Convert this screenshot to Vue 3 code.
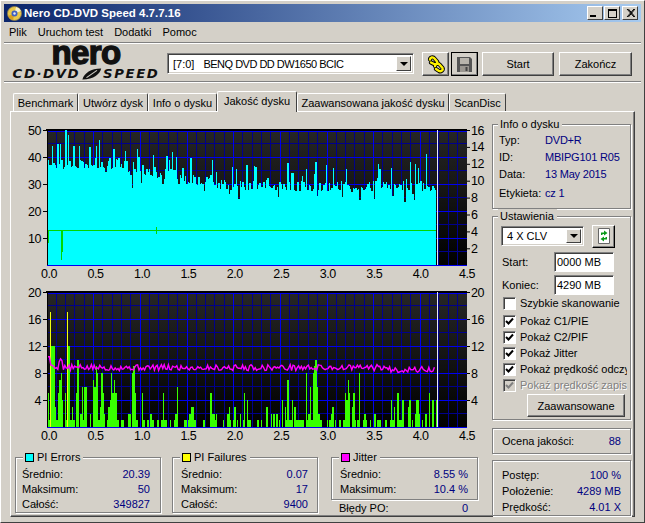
<script setup>
// seeded noise so the plots come out the same on every load
function makeRand(seed) {
  let s = seed
  return () => {
    s = (s * 1664525 + 1013904223) % 4294967296
    return s / 4294967296
  }
}

const PLOT_W = 420
const PLOT_H = 135
const END_X = 389 // where the scan stops, inside the plot

function base(x) {
  if (x < 80) return 37.5
  if (x < 110) return 35
  if (x < 130) return 33.5
  if (x < 165) return 31.5
  if (x < 220) return 29.5
  return 29
}

// closed staircase shape, reads as solid bars without seams between them
function stepPath(list, step, scale) {
  let d = `M${list[0].x} ${PLOT_H}`
  for (const b of list) {
    d += `V${(PLOT_H - b.v * scale).toFixed(1)}H${(b.x + step).toFixed(2)}`
  }
  return d + `V${PLOT_H}Z`
}

function piePath() {
  const rand = makeRand(17)
  const list = []
  const spikes = { 18: 50, 21: 48, 5: 44, 10: 45, 13: 45, 49: 44, 66: 43, 90: 43, 379: 41, 279: 37, 32: 44, 26: 44 }
  for (let x = 1; x <= END_X; x += 1.33) {
    const r = rand()
    let v = base(x) + (rand() - 0.45) * 4
    if (r > 0.85) v += 3 + rand() * 5
    else if (r < 0.1) v -= 2 + rand() * 3
    const key = Math.round(x)
    if (spikes[key]) v = spikes[key]
    list.push({ x, v })
  }
  return stepPath(list, 1.33, 2.7)
}

function failBars() {
  const rand = makeRand(91)
  const peaks = {
    1: 5, 3: 5, 4: 17, 5: 12, 6: 12, 7: 12, 8: 3, 10: 5, 11: 5, 12: 7, 13: 5, 14: 8, 15: 4, 17: 2, 18: 5, 21: 17, 22: 12,
    25: 3, 30: 10, 29: 5, 34: 6, 37: 6, 38: 6, 46: 7, 47: 6, 48: 13, 49: 9, 50: 8, 54: 8, 55: 5, 61: 3, 62: 4,
    64: 8, 65: 5, 66: 14, 67: 7, 68: 5, 85: 8, 86: 9, 87: 7, 88: 5, 94: 5, 116: 5, 130: 6, 145: 3, 163: 5,
    197: 5, 200: 4, 238: 3, 240: 7, 245: 4, 258: 8, 263: 6, 266: 8, 267: 9, 268: 10, 269: 6, 311: 8, 262: 4, 306: 5,
    270: 6, 298: 5, 299: 4, 300: 8, 301: 7, 302: 5, 370: 4, 381: 5, 385: 4, 388: 4, 362: 4, 360: 3, 350: 5, 355: 4,
  }
  const bars = []
  for (let x = 1; x <= END_X; x += 1.4) {
    const r = rand()
    let v = 0
    if (r > 0.42) v = 1
    if (r > 0.76) v = 2
    if (r > 0.91) v = 3
    if (r > 0.975) v = 4
    // the tall yellow needles stay one bar wide
    const p = peaks[Math.round(x)] || Math.min(peaks[Math.floor(x)] || 0, 12)
    if (p) v = p
    bars.push({ x, v })
  }
  return bars
}

function jitterPoints() {
  const rand = makeRand(5)
  const pts = []
  for (let x = 1; x <= END_X - 1; x += 1.4) {
    let v = 8.8 + (rand() - 0.5) * 0.9
    if (x < 3) v = 10.4
    else if (x < 5) v = 9.2
    else if (x > 12 && x < 16) v = 10.2 - rand() * 0.6
    const fall = x > 340 ? 0.3 : 0
    pts.push(`${x.toFixed(1)},${(PLOT_H - (v - fall) * 6.75).toFixed(1)}`)
  }
  return pts.join(' ')
}

const bars = failBars()
const greenPath = stepPath(bars.map((b) => ({ x: b.x, v: Math.min(b.v, 12) })), 1.4, 6.75)
const yellowPath = bars
  .filter((b) => b.v >= 13)
  .map((b) => `M${b.x.toFixed(1)} ${PLOT_H}V${(PLOT_H - b.v * 6.75).toFixed(1)}`)
  .join('')

const xLabels = ['0.0', '0.5', '1.0', '1.5', '2.0', '2.5', '3.0', '3.5', '4.0', '4.5'].map((t, i) => ({ t, x: 2 + i * 46.45 }))

const charts = [
  {
    id: 'top',
    left: ['50', '40', '30', '20', '10'].map((t, i) => ({ t, y: i * 27 })),
    right: ['16', '14', '12', '10', '8', '6', '4', '2'].map((t, i) => ({ t, y: i * 16.9 })),
    majorY: [27, 54, 81, 108],
    minorY: [13.5, 40.5, 67.5, 94.5, 121.5],
  },
  {
    id: 'bottom',
    left: ['20', '16', '12', '8', '4'].map((t, i) => ({ t, y: i * 27 })),
    right: ['20', '16', '12', '8', '4'].map((t, i) => ({ t, y: i * 27 })),
    majorY: [27, 54, 81, 108],
    minorY: [13.5, 40.5, 67.5, 94.5, 121.5],
  },
]

const majorX = [1, 2, 3, 4, 5, 6, 7, 8].map((i) => i * 46.67)
const minorX = []
for (let i = 1; i < 45; i++) if (i % 5) minorX.push(i * 9.333)

const pie = piePath()
const jitter = jitterPoints()

const tabs = [
  { name: 'Benchmark', w: 65 },
  { name: 'Utwórz dysk', w: 70 },
  { name: 'Info o dysku', w: 69 },
  { name: 'Jakość dysku', w: 80, active: true },
  { name: 'Zaawansowana jakość dysku', w: 152 },
  { name: 'ScanDisc', w: 57 },
]

const discInfo = [
  ['Typ:', 'DVD+R'],
  ['ID:', 'MBIPG101 R05'],
  ['Data:', '13 May 2015'],
  ['Etykieta:', 'cz 1'],
]

const checks = [
  { t: 'Szybkie skanowanie', on: false },
  { t: 'Pokaż C1/PIE', on: true },
  { t: 'Pokaż C2/PIF', on: true },
  { t: 'Pokaż Jitter', on: true },
  { t: 'Pokaż prędkość odczytu', on: true },
  { t: 'Pokaż prędkość zapisu', on: true, off: true },
]

const stats = [
  { name: 'PI Errors', color: '#00ffff', rows: [['Średnio:', '20.39'], ['Maksimum:', '50'], ['Całość:', '349827']] },
  { name: 'PI Failures', color: '#ffff00', rows: [['Średnio:', '0.07'], ['Maksimum:', '17'], ['Całość:', '9400']] },
]
</script>

<template>
  <div class="window">
    <div class="titlebar">
      <svg class="app-icon" width="15" height="15" viewBox="0 0 15 15">
        <circle cx="7.5" cy="7.5" r="7" fill="#e8c84a" stroke="#8a7a50" stroke-width="0.8" />
        <path d="M7.5 7.5L14 5A7 7 0 0 0 9 1Z" fill="#f4f0d0" />
        <path d="M7.5 7.5L1 10A7 7 0 0 0 6 14Z" fill="#d8a020" />
        <circle cx="7.5" cy="7.5" r="3" fill="#4060c0" />
        <circle cx="7.5" cy="7.5" r="1.2" fill="#e8e8f0" />
      </svg>
      <span class="title">Nero CD-DVD Speed 4.7.7.16</span>
      <div class="caption-btns">
        <button class="cap"><i class="cap-min"></i></button>
        <button class="cap"><i class="cap-max"></i></button>
        <button class="cap close">
          <svg width="9" height="8" viewBox="0 0 9 8"><path d="M1 0L8 8M2.4 0L9 8M8 0L1 8M9 0L2.4 8" stroke="#000" stroke-width="1" fill="none" /></svg>
        </button>
      </div>
    </div>

    <div class="menu">
      <span>Plik</span>
      <span>Uruchom test</span>
      <span>Dodatki</span>
      <span>Pomoc</span>
    </div>

    <div class="toolbar">
      <div class="logo">
        <div class="logo-nero">nero</div>
        <div class="logo-sub">
          <span>CD·DVD</span>
          <svg width="20" height="12" viewBox="0 0 22 12">
            <path d="M2 12C4 5 10 0 20 0C19 6 13 12 2 12Z" fill="#111" />
            <path d="M6 10L16 2" stroke="#d4d0c8" stroke-width="1" />
          </svg>
          <span>SPEED</span>
        </div>
      </div>
      <div class="combo drive">
        <span class="combo-text"><span class="drive-id">[7:0]</span><span class="drive-name">BENQ DVD DD DW1650 BCIC</span></span>
        <span class="combo-arrow"><i></i></span>
      </div>
      <button class="btn icon-btn">
        <svg width="18" height="19" viewBox="0 0 18 19">
          <g fill="none" stroke-linecap="round">
            <path d="M3 4.5C3 2.5 6 1.5 7.5 3.5L10 6.5C11 8 9 10 7 9L4 7.5" stroke="#000" stroke-width="4.2" />
            <path d="M8 11C8 9 11 8 12.5 9.5L15.5 13C16.5 15 14 17 12 16L9 14" stroke="#000" stroke-width="4.2" />
            <path d="M3 4.5C3 2.5 6 1.5 7.5 3.5L10 6.5C11 8 9 10 7 9L4 7.5" stroke="#fff200" stroke-width="2.4" />
            <path d="M8 11C8 9 11 8 12.5 9.5L15.5 13C16.5 15 14 17 12 16L9 14" stroke="#fff200" stroke-width="2.4" />
          </g>
        </svg>
      </button>
      <button class="btn icon-btn save">
        <svg width="15" height="15" viewBox="0 0 15 15">
          <path d="M0 0H13L15 2V15H0Z" fill="#555" />
          <rect x="3" y="1" width="9" height="6" fill="#b8b4ac" />
          <rect x="3" y="9" width="9" height="6" fill="#9a9690" />
          <rect x="8.5" y="10" width="2" height="4" fill="#444" />
        </svg>
      </button>
      <button class="btn start">Start</button>
      <button class="btn finish">Zakończ</button>
    </div>

    <div class="tabs">
      <div
        v-for="tab in tabs"
        :key="tab.name"
        class="tab"
        :class="{ active: tab.active }"
        :style="{ width: tab.w + 'px' }"
      >{{ tab.name }}</div>
    </div>

    <div class="panel">
      <div class="left">
        <svg v-for="c in charts" :key="c.id" class="chart" width="480" height="162" viewBox="-36 -8 480 162">
          <defs>
            <linearGradient :id="'bg-' + c.id" x1="0" y1="0" x2="0" y2="1">
              <stop offset="0" stop-color="#262626" />
              <stop offset="1" stop-color="#000" />
            </linearGradient>
          </defs>
          <rect x="0" y="0" :width="PLOT_W" :height="PLOT_H" :fill="'url(#bg-' + c.id + ')'" />
          <g shape-rendering="crispEdges">
            <path
              :d="minorX.map((x) => `M${x} 0V${PLOT_H}`).join('') + c.minorY.map((y) => `M0 ${y}H${PLOT_W}`).join('')"
              stroke="#00008c"
              stroke-width="1"
            />
            <path
              :d="majorX.map((x) => `M${x} 0V${PLOT_H}`).join('') + c.majorY.map((y) => `M0 ${y}H${PLOT_W}`).join('')"
              stroke="#0000f0"
              stroke-width="1"
            />
            <rect x="-1" y="-1" :width="PLOT_W + 1" height="1.5" fill="#000" />
            <path :d="`M0 1.5H${PLOT_W}M0 ${PLOT_H}H${PLOT_W}`" stroke="#0000f0" stroke-width="1" />

            <template v-if="c.id === 'top'">
              <path :d="pie" fill="#00ffff" />
              <path :d="`M1 100.5H${END_X}`" stroke="#00d800" stroke-width="1" />
              <path d="M1.5 100V113M14 100V130M15.5 100V122M109 97V104" stroke="#00d800" stroke-width="1" />
            </template>
            <template v-else>
              <path :d="greenPath" fill="#38ff00" />
              <path :d="yellowPath" stroke="#f0ff10" stroke-width="1" />
            </template>
            <rect x="-0.5" y="-1" width="1.5" :height="PLOT_H + 1" fill="#000" />
            <path :d="`M${END_X + 1.5} 0V${PLOT_H}`" stroke="#e8e8f4" stroke-width="1" />
          </g>
          <polyline v-if="c.id === 'bottom'" :points="jitter" fill="none" stroke="#ff00ff" stroke-width="1.4" />

          <g class="axis">
            <g v-for="l in c.left" :key="'l' + l.t">
              <path :d="`M-4 ${l.y + 0.5}H0`" stroke="#000" />
              <text x="-6" :y="l.y + 4.5" text-anchor="end">{{ l.t }}</text>
            </g>
            <g v-for="r in c.right" :key="'r' + r.t">
              <path :d="`M${PLOT_W} ${r.y + 0.5}H${PLOT_W + 3}`" stroke="#000" />
              <text :x="PLOT_W + 4" :y="r.y + 4.5">{{ r.t }}</text>
            </g>
            <text
              v-for="x in xLabels"
              :key="x.t"
              :x="x.x"
              :y="PLOT_H + 12.5"
              text-anchor="middle"
            >{{ x.t }}</text>
          </g>
        </svg>

        <div class="stats">
          <div v-for="s in stats" :key="s.name" class="group stat">
            <span class="legend"><i class="swatch" :style="{ background: s.color }"></i>{{ s.name }}</span>
            <div v-for="r in s.rows" :key="r[0]" class="stat-row">
              <span>{{ r[0] }}</span><span class="val">{{ r[1] }}</span>
            </div>
          </div>
          <div class="jitter-col">
            <div class="group stat">
              <span class="legend"><i class="swatch" style="background: #ff00ff"></i>Jitter</span>
              <div class="stat-row"><span>Średnio:</span><span class="val">8.55 %</span></div>
              <div class="stat-row"><span>Maksimum:</span><span class="val">10.4 %</span></div>
            </div>
            <div class="stat-row po"><span>Błędy PO:</span><span class="val">0</span></div>
          </div>
        </div>
      </div>

      <div class="right">
        <div class="group info">
          <span class="legend">Info o dysku</span>
          <div v-for="r in discInfo" :key="r[0]" class="info-row">
            <span class="info-key">{{ r[0] }}</span><span class="val">{{ r[1] }}</span>
          </div>
        </div>

        <div class="group settings">
          <span class="legend">Ustawienia</span>
          <div class="speed-row">
            <div class="combo speed">
              <span class="combo-text">4 X CLV</span>
              <span class="combo-arrow"><i></i></span>
            </div>
            <button class="btn refresh">
              <svg width="12" height="16" viewBox="0 0 12 16">
                <path d="M0.5 0.5H11.5V15.5H0.5Z" fill="#fff" stroke="#666" />
                <path d="M3 7V4.5H6V2.5L9.5 5L6 7.5V6H4.5V7ZM9 9V11.5H6V13.5L2.5 11L6 8.5V10H7.5V9Z" fill="#0a9a1a" />
              </svg>
            </button>
          </div>
          <div class="field"><label>Start:</label><span class="input">0000 MB</span></div>
          <div class="field"><label>Koniec:</label><span class="input">4290 MB</span></div>
          <div class="checks">
            <div v-for="c in checks" :key="c.t" class="check-row" :class="{ disabled: c.off }">
              <span class="box">
                <svg v-if="c.on" width="9" height="9" viewBox="0 0 9 9">
                  <path d="M1 4L3.5 6.5L8 1.5" fill="none" :stroke="c.off ? '#808080' : '#000'" stroke-width="2" />
                </svg>
              </span>
              <span class="check-text">{{ c.t }}</span>
            </div>
          </div>
          <button class="btn advanced">Zaawansowane</button>
        </div>

        <div class="group quality">
          <span>Ocena jakości:</span><span class="val">88</span>
        </div>

        <div class="group progress">
          <div class="stat-row"><span>Postęp:</span><span class="val">100 %</span></div>
          <div class="stat-row"><span>Położenie:</span><span class="val">4289 MB</span></div>
          <div class="stat-row"><span>Prędkość:</span><span class="val">4.01 X</span></div>
        </div>
      </div>
    </div>
  </div>
</template>

<style>
html, body {
  margin: 0;
  background: #d4d0c8;
}
</style>

<style scoped>
.window {
  width: 645px;
  height: 523px;
  box-sizing: border-box;
  padding: 3px 3px 0;
  background: #d4d0c8;
  font-family: "Liberation Sans", Arial, sans-serif;
  font-size: 11px;
  color: #000;
  overflow: hidden;
  border-top: 1px solid #fff;
  border-left: 1px solid #fff;
  border-right: 1px solid #404040;
  border-bottom: 1px solid #404040;
}

.titlebar {
  height: 18px;
  display: flex;
  align-items: center;
  padding: 0 3px 0 3px;
  background: linear-gradient(90deg, #0a246a, #a6caf0);
}
.app-icon { flex: none; margin-right: 2px; }
.title {
  color: #fff;
  font-weight: 700;
  font-size: 11.5px;
}
.caption-btns { margin-left: auto; display: flex; }
.cap {
  width: 16px;
  height: 14px;
  padding: 0;
  margin-left: 1px;
  background: #d4d0c8;
  border: 1px solid;
  border-color: #fff #404040 #404040 #fff;
  display: flex;
  align-items: center;
  justify-content: center;
  position: relative;
}
.cap.close { margin-left: 2px; }
.cap-min { display: block; width: 6px; height: 2px; background: #000; margin: 6px 4px 0 0; }
.cap-max { display: block; width: 9px; height: 9px; box-sizing: border-box; border: 1px solid #000; border-top-width: 2px; }

.menu {
  height: 20px;
  display: flex;
  align-items: center;
  gap: 11px;
  padding-left: 5px;
  border-bottom: 1px solid #808080;
}

.toolbar {
  height: 37px;
  display: flex;
  align-items: flex-start;
  border-top: 1px solid #fff;
  border-bottom: 1px solid #808080;
  box-shadow: 0 1px 0 #fff;
}
.logo { width: 160px; flex: none; text-align: center; color: #111; margin-right: 3px; }
.logo-nero {
  font-weight: 700;
  font-size: 33px;
  line-height: 18px;
  letter-spacing: -0.6px;
  -webkit-text-stroke: 1.4px #111;
  margin: 0 0 0 4px;
  height: 24px;
}
.logo-sub {
  display: flex;
  justify-content: center;
  align-items: center;
  height: 12px;
  font-family: "DejaVu Sans", sans-serif;
  font-weight: 700;
  font-style: italic;
  font-size: 11.5px;
  letter-spacing: 1.4px;
  transform: translateX(2px) scaleX(1.15);
}

.btn {
  font: inherit;
  color: #000;
  background: #d4d0c8;
  border: 1px solid;
  border-color: #fff #404040 #404040 #fff;
  box-shadow: inset -1px -1px 0 #808080;
  padding: 0;
  display: flex;
  align-items: center;
  justify-content: center;
}
.combo {
  display: flex;
  align-items: center;
  background: #fff;
  box-sizing: border-box;
  border: 1px solid;
  border-color: #808080 #fff #fff #808080;
  box-shadow: inset 1px 1px 0 #404040, inset -1px -1px 0 #d4d0c8;
  padding: 2px;
}
.combo-text { flex: 1; padding-left: 3px; white-space: nowrap; overflow: hidden; }
.combo-arrow {
  width: 15px;
  height: 100%;
  flex: none;
  box-sizing: border-box;
  background: #d4d0c8;
  border: 1px solid;
  border-color: #fff #404040 #404040 #fff;
  display: flex;
  align-items: center;
  justify-content: center;
}
.combo-arrow i {
  width: 0;
  height: 0;
  border: 4px solid transparent;
  border-top: 4px solid #000;
  border-bottom: 0;
}
.drive { width: 247px; height: 21px; margin-top: 9px; }
.drive-id { margin-right: 9px; }
.drive-name { letter-spacing: -0.5px; }
.icon-btn { width: 27px; height: 24px; margin: 8px 0 0 8px; }
.save {
  margin-left: 2px;
  outline: 1px solid #000;
  outline-offset: -1px;
}
.start { width: 72px; height: 24px; margin: 8px 0 0 4px; }
.finish { width: 73px; height: 24px; margin: 8px 0 0 5px; }

.tabs {
  display: flex;
  align-items: flex-end;
  height: 28px;
  padding-left: 9px;
  margin-top: 1px;
}
.tab {
  height: 18px;
  box-sizing: border-box;
  text-align: center;
  line-height: 18px;
  white-space: nowrap;
  border: 1px solid;
  border-color: #fff #404040 transparent #fff;
  border-bottom: 0;
  border-radius: 2px 2px 0 0;
}
.tab.active {
  height: 21px;
  line-height: 19px;
  position: relative;
  z-index: 1;
  background: #d4d0c8;
  margin-bottom: -1px;
}

.panel {
  width: 625px;
  height: 406px;
  margin-left: 6px;
  box-sizing: border-box;
  display: flex;
  padding-top: 10px;
  border: 1px solid;
  border-color: #fff #404040 #404040 #fff;
  box-shadow: inset -1px -1px 0 #808080;
}
.left { width: 480px; flex: none; }
.chart { display: block; }
.axis text {
  font-size: 12.5px;
  letter-spacing: -0.5px;
  fill: #000;
}

.group {
  position: relative;
  box-sizing: border-box;
  border: 1px solid #808080;
  box-shadow: 1px 1px 0 #fff, inset 1px 1px 0 #fff;
}
.legend {
  position: absolute;
  top: -8px;
  left: 7px;
  padding: 0 3px 0 2px;
  background: #d4d0c8;
  line-height: 14px;
  display: flex;
  align-items: center;
  white-space: nowrap;
}
.right .legend { left: 5px; }
.swatch {
  width: 7px;
  height: 7px;
  border: 1px solid #000;
  margin-right: 3px;
}
.val { color: #000080; }

.stats {
  display: flex;
  padding-left: 4px;
  margin-top: 11px;
  gap: 11px;
}
.stat { width: 146px; height: 56px; padding: 9px 9px 0 8px; }
.stats > .stat:first-child { padding: 9px 10px 0 6px; }
.stat-row {
  display: flex;
  justify-content: space-between;
  height: 15px;
  line-height: 15px;
}
.jitter-col { width: 147px; margin-left: 2px; }
.jitter-col .stat { height: 43px; width: 147px; }
.po { height: 15px; margin-top: 1px; padding: 0 10px 0 8px; line-height: 15px; }

.right {
  width: 139px;
  flex: none;
  margin: 2px 0 0 1px;
  display: flex;
  flex-direction: column;
}
.info { height: 85px; padding: 7px 4px 0 6px; }
.info-row { display: flex; height: 17px; line-height: 17px; }
.info-row:last-child { margin-top: 2px; }
.info-key { width: 46px; flex: none; }
.info-row .val { letter-spacing: -0.2px; }

.settings { height: 204px; margin-top: 7px; padding: 8px 3px 0 9px; }
.speed-row { display: flex; align-items: center; height: 22px; }
.speed { width: 83px; height: 20px; margin-left: -1px; }
.refresh { width: 23px; height: 23px; margin-left: 8px; border-color: #fff #000 #000 #fff; }
.field { display: flex; align-items: center; height: 20px; margin-top: 3px; }
.speed-row + .field { margin-top: 5px; }
.field label { width: 52px; }
.input {
  width: 60px;
  height: 20px;
  box-sizing: border-box;
  background: #fff;
  border: 1px solid;
  border-color: #808080 #fff #fff #808080;
  box-shadow: inset 1px 1px 0 #404040;
  padding-left: 2px;
  line-height: 18px;
  color: #000;
}
.check-row { display: flex; align-items: center; height: 16px; }
.check-row:first-child { margin-bottom: 2px; }
.box {
  width: 13px;
  height: 13px;
  box-sizing: border-box;
  flex: none;
  display: flex;
  align-items: center;
  justify-content: center;
  background: #fff;
  border: 1px solid;
  border-color: #808080 #fff #fff #808080;
  box-shadow: inset 1px 1px 0 #404040;
  margin-left: 1px;
}
.check-text { margin-left: 4px; white-space: nowrap; overflow: hidden; width: 107px; }
.disabled .box { background: #d4d0c8; }
.disabled .check-text { color: #808080; text-shadow: 1px 1px 0 #fff; }
.advanced { width: 98px; height: 23px; margin: 1px 0 0 25px; }

.quality {
  height: 26px;
  margin-top: 8px;
  padding: 0 9px;
  display: flex;
  align-items: center;
  justify-content: space-between;
}
.progress { height: 56px; margin-top: 6px; padding: 6px 9px 0; }
.progress .stat-row { height: 16px; line-height: 16px; }
</style>
